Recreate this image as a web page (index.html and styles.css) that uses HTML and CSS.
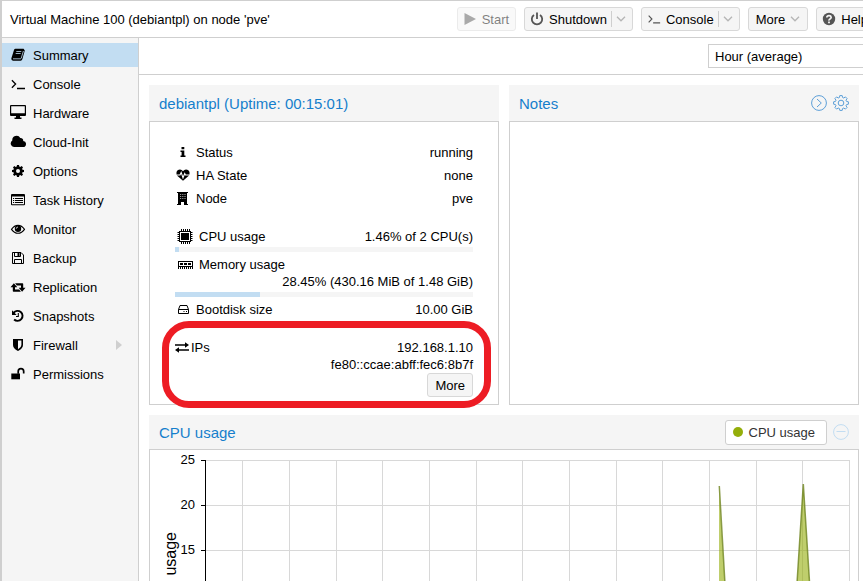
FILE: index.html
```html
<!DOCTYPE html>
<html lang="en">
<head>
<meta charset="utf-8">
<title>Virtual Machine 100</title>
<link rel="stylesheet" href="styles.css">
</head>
<body>
<svg class="sprite" aria-hidden="true">
  <symbol id="book" viewBox="0 0 16 16"><path d="M5.400 1.800H13.600L14.800 3.400 12.400 12Q12 13.800 10.600 13.800H3Q1.200 13.400 1.300 11.400L4 3Q4.400 1.800 5.400 1.800Z"/><path d="M6.300 4.500H11.300M5.700 6.500H10.700M3 11.800H10.400Q11 11.800 11.300 11L13.400 4" fill="none" stroke="#c2ddf2" stroke-width=".8"/></symbol>
  <symbol id="terminal" viewBox="0 0 16 16"><path d="M1.900 4.200 5.600 8 1.900 11.800M7 12.500H15" fill="none" stroke="currentColor" stroke-width="1.300"/></symbol>
  <symbol id="desktop" viewBox="0 0 16 16"><path fill-rule="evenodd" d="M1 0H15Q16 0 16 1V10Q16 11 15 11H10V12.500H11.500V14H4.500V12.500H6V11H1Q0 11 0 10V1Q0 0 1 0ZM1.200 1.200V8.200H14.800V1.200Z"/></symbol>
  <symbol id="cloud" viewBox="0 0 16 16"><path d="M4 13A3.500 3.500 0 0 1 2.300 6.600 4.300 4.300 0 0 1 10.300 4 2.600 2.600 0 0 1 13.200 7 3 3 0 0 1 12.800 13Z"/></symbol>
  <symbol id="gear" viewBox="0 0 16 16"><path fill-rule="evenodd" d="M7 2H9L9.300 3.600 10.300 4 11.700 3.100 13 4.400 12.100 5.800 12.500 6.800 14 7V9L12.500 9.300 12.100 10.200 13 11.600 11.700 13 10.300 12.100 9.300 12.500 9 14H7L6.700 12.500 5.700 12.100 4.300 13 3 11.600 3.900 10.200 3.500 9.300 2 9V7L3.500 6.800 3.900 5.800 3 4.400 4.300 3.100 5.700 4 6.700 3.600ZM8 6A2 2 0 1 0 8 10 2 2 0 1 0 8 6Z"/></symbol>
  <symbol id="list" viewBox="0 0 16 16"><path fill-rule="evenodd" d="M2 2H14Q15 2 15 3V12.300Q15 13.300 14 13.300H2Q1 13.300 1 12.300V3Q1 2 2 2ZM2 4.500V12.300H14V4.500Z"/><path d="M3 6.500H4.200M5 6.500H13M3 8.500H4.200M5 8.500H13M3 10.500H4.200M5 10.500H13" stroke="currentColor"/></symbol>
  <symbol id="eye" viewBox="0 0 16 16"><path fill="none" stroke="currentColor" stroke-width="1.100" d="M1.500 8.400Q4.200 4.400 8 4.400T14.500 8.400Q11.800 12.300 8 12.300T1.500 8.400Z"/><circle cx="8" cy="7.800" r="3.200"/><path d="M6.300 7.700Q6.300 6 8 6" fill="none" stroke="#f4f4f4" stroke-width=".8"/></symbol>
  <symbol id="floppy" viewBox="0 0 16 16"><path d="M2.500 2.500H11L13.500 5V13.500H2.500ZM4.500 13.500V9.500H11.500V13.500M4.500 2.500V6.500H10.500V2.500" fill="none" stroke="currentColor"/><path d="M7.500 3H9.500V6H7.500Z"/></symbol>
  <symbol id="retweet" viewBox="0 0 16 16"><path d="M3.900 4.300 7.300 8.200H5V10.600H9.200L10.900 12.700H3.500Q2.800 12.700 2.800 12V8.200H.500ZM12.100 12.700 8.700 8.800H11V6.400H6.800L5.100 4.300H12.500Q13.200 4.300 13.200 5V8.800H15.500Z"/></symbol>
  <symbol id="history" viewBox="0 0 16 16"><path d="M3.600 4.800A5 5 0 1 1 4.100 11.500" fill="none" stroke="currentColor" stroke-width="1.900"/><path d="M2 2.300V7H6.700Z"/><path d="M8.300 5V8.500H6" fill="none" stroke="currentColor" stroke-width="1.100"/></symbol>
  <symbol id="shield" viewBox="0 0 16 16"><path fill-rule="evenodd" d="M3 2H13V8Q13 11.500 8 14 3 11.500 3 8ZM8 3.600V12.200Q11.400 10.400 11.400 8V3.600Z"/></symbol>
  <symbol id="unlock" viewBox="0 0 16 16"><path d="M1.300 7.500H10V13.300H1.300Z"/><path d="M8.200 7.800V5.400A2.700 2.700 0 0 1 13.700 5.400V7.500" fill="none" stroke="currentColor" stroke-width="1.700"/></symbol>
  <symbol id="info" viewBox="0 0 16 16"><path d="M6.500 3H9.300V5.200H6.500ZM5.500 6.400H9.300V11.400H10.500V13H5.500V11.400H6.600V8H5.500Z"/></symbol>
  <symbol id="heart" viewBox="0 0 16 16"><path d="M8 13.800 2.500 9Q1 7.200 1.500 5.200 2.200 2.500 5 2.500 6.800 2.500 8 4.200 9.200 2.500 11 2.500 13.800 2.500 14.500 5.200 15 7.200 13.500 9Z"/><path d="M1.500 8H5L6.200 5.400 8 10.800 9.700 6.500 10.500 8H14.500" fill="none" stroke="#fff" stroke-width="1.100"/></symbol>
  <symbol id="building" viewBox="0 0 16 16"><path d="M3 2H12V14H9V12H6V14H3Z"/><path d="M5 4.500H11M5 6.500H11M5 8.500H11" stroke="#999" stroke-dasharray="1 .8"/><path d="M2 14.500H6M9 14.500H13M2 2.500H13" stroke="currentColor"/></symbol>
  <symbol id="chip" viewBox="0 0 16 16"><path fill-rule="evenodd" d="M2 3H14V14H2ZM3 4V13H13V4Z"/><path d="M4 5H12V12H4Z"/><path d="M4.500 1V3M6.500 1V3M8.500 1V3M10.500 1V3M12.500 1V3M4.500 14V16M6.500 14V16M8.500 14V16M10.500 14V16M12.500 14V16M.5 4.500H2M.5 6.500H2M.5 8.500H2M.5 10.500H2M.5 12.500H2M14 4.500H15.500M14 6.500H15.500M14 8.500H15.500M14 10.500H15.500M14 12.500H15.500" stroke="currentColor"/></symbol>
  <symbol id="memory" viewBox="0 0 16 16"><path fill-rule="evenodd" d="M1 5H16V11H1ZM2 6V10H15V6Z"/><path d="M3 7H6V9H3ZM7 7H10V9H7ZM11 7H14V9H11Z"/><path d="M1 12H16" stroke="currentColor" stroke-width="2" stroke-dasharray="1 1"/></symbol>
  <symbol id="disk" viewBox="0 0 16 16"><path d="M3.500 8.500 5 4.500H12L13.500 8.500V12.500H3.500ZM3.500 8.500H13.500" fill="none" stroke="currentColor"/><path d="M8.500 10.500H9.500M11 10.500H12" stroke="currentColor"/></symbol>
  <symbol id="exchange" viewBox="0 0 14 16"><path d="M0 5.200H10V3.200L14 6 10 8.800V6.800H0ZM14 10.200H4V8.200L0 11 4 13.800V11.800H14Z"/></symbol>
  <symbol id="play" viewBox="0 0 14 14"><path d="M1.500 1 13 7 1.500 13Z"/></symbol>
  <symbol id="power" viewBox="0 0 14 14"><path d="M4 3A5.200 5.200 0 1 0 10 3M7 .5V7" fill="none" stroke="currentColor" stroke-width="1.800"/></symbol>
  <symbol id="help" viewBox="0 0 14 14"><circle cx="7" cy="7" r="6.200"/><path d="M4.800 5.500Q5 3.600 7 3.600T9.200 5.300Q9.200 6.300 8 7T7 8.600" fill="none" stroke="#f5f5f5" stroke-width="1.700"/><path d="M6.100 9.400H7.900V11.200H6.100Z" fill="#f5f5f5"/></symbol>
  <symbol id="chevron" viewBox="0 0 10 6"><path d="M1 .8 5 4.800 9 .8" fill="none" stroke="#b5b5b5" stroke-width="1.300"/></symbol>
  <symbol id="next" viewBox="0 0 16 16"><circle cx="8" cy="8" r="7.400" fill="none" stroke="currentColor"/><path d="M6 4 10.300 8 6 12" fill="none" stroke="currentColor"/></symbol>
  <symbol id="settings" viewBox="0 0 16 16"><path d="M6.800.6H9.200L9.600 2.500 10.800 3 12.400 1.900 14.100 3.600 13 5.200 13.500 6.400 15.400 6.800V9.200L13.500 9.600 13 10.800 14.100 12.400 12.400 14.100 10.800 13 9.600 13.500 9.200 15.400H6.800L6.400 13.500 5.200 13 3.600 14.100 1.900 12.400 3 10.800 2.500 9.600.6 9.200V6.800L2.500 6.400 3 5.200 1.900 3.600 3.600 1.900 5.200 3 6.400 2.500Z" fill="none" stroke="currentColor"/><circle cx="8" cy="8" r="2.800" fill="none" stroke="currentColor"/></symbol>
  <symbol id="minus" viewBox="0 0 16 16"><circle cx="8" cy="8" r="7.400" fill="none" stroke="currentColor"/><path d="M3.500 7.500H12.500" stroke="currentColor"/></symbol>
</svg>

<div class="app">
  <header class="titlebar">
    <h1>Virtual Machine 100 (debiantpl) on node 'pve'</h1>
    <div class="actions">
      <button class="btn" disabled><svg class="glyph"><use href="#play"/></svg>Start</button>
      <button class="btn"><svg class="glyph"><use href="#power"/></svg>Shutdown<span class="drop"><svg class="chev"><use href="#chevron"/></svg></span></button>
      <button class="btn"><svg class="glyph"><use href="#terminal"/></svg>Console<span class="drop"><svg class="chev"><use href="#chevron"/></svg></span></button>
      <button class="btn menu">More<svg class="chev"><use href="#chevron"/></svg></button>
      <button class="btn"><svg class="glyph"><use href="#help"/></svg>Help</button>
    </div>
  </header>
  <div class="columns">
    <nav class="side">
      <a class="active" href="#"><svg class="icon"><use href="#book"/></svg>Summary</a>
      <a href="#"><svg class="icon"><use href="#terminal"/></svg>Console</a>
      <a href="#"><svg class="icon"><use href="#desktop"/></svg>Hardware</a>
      <a href="#"><svg class="icon"><use href="#cloud"/></svg>Cloud-Init</a>
      <a href="#"><svg class="icon"><use href="#gear"/></svg>Options</a>
      <a href="#"><svg class="icon"><use href="#list"/></svg>Task History</a>
      <a href="#"><svg class="icon"><use href="#eye"/></svg>Monitor</a>
      <a href="#"><svg class="icon"><use href="#floppy"/></svg>Backup</a>
      <a href="#"><svg class="icon"><use href="#retweet"/></svg>Replication</a>
      <a href="#"><svg class="icon"><use href="#history"/></svg>Snapshots</a>
      <a href="#"><svg class="icon"><use href="#shield"/></svg>Firewall<span class="caret"></span></a>
      <a href="#"><svg class="icon"><use href="#unlock"/></svg>Permissions</a>
    </nav>
    <main>
      <div class="rangebar">
        <select aria-label="Time range"><option>Hour (average)</option></select>
      </div>
      <div class="panels">
        <section class="panel">
          <header><h2>debiantpl (Uptime: 00:15:01)</h2></header>
          <div class="body status">
            <div class="row"><svg class="icon"><use href="#info"/></svg><span>Status</span><b>running</b></div>
            <div class="row"><svg class="icon"><use href="#heart"/></svg><span>HA State</span><b>none</b></div>
            <div class="row"><svg class="icon"><use href="#building"/></svg><span>Node</span><b>pve</b></div>
            <div class="meter">
              <div class="line"><svg class="icon"><use href="#chip"/></svg><span>CPU usage</span><b>1.46% of 2 CPU(s)</b></div>
              <div class="bar"><i style="width:1.46%"></i></div>
            </div>
            <div class="meter">
              <div class="line"><svg class="icon"><use href="#memory"/></svg><span>Memory usage</span><b>28.45% (430.16 MiB of 1.48 GiB)</b></div>
              <div class="bar"><i style="width:28.45%"></i></div>
            </div>
            <div class="line disk"><svg class="icon"><use href="#disk"/></svg><span>Bootdisk size</span><b>10.00 GiB</b></div>
            <div class="ips">
              <div class="line"><svg class="icon"><use href="#exchange"/></svg><span>IPs</span><b>192.168.1.10<br>fe80::ccae:abff:fec6:8b7f</b></div>
              <button class="btn">More</button>
            </div>
          </div>
        </section>
        <section class="panel">
          <header><h2>Notes</h2>
            <button class="tool" aria-label="Expand"><svg><use href="#next"/></svg></button>
            <button class="tool" aria-label="Edit"><svg><use href="#settings"/></svg></button>
          </header>
          <div class="body"></div>
        </section>
        <section class="panel wide">
          <header><h2>CPU usage</h2>
            <button class="legend"><i></i>CPU usage</button>
            <button class="tool faded" aria-label="Reset zoom"><svg><use href="#minus"/></svg></button>
          </header>
          <div class="body">
            <svg class="chart" viewBox="0 0 708 160">
              <path class="grid" d="M56 10.500H700M56 55.500H700M56 100.500H700M56 145.500H700M92.500 10V160M139.500 10V160M186.500 10V160M232.500 10V160M279.500 10V160M326.500 10V160M372.500 10V160M419.500 10V160M466.500 10V160M512.500 10V160M559.500 10V160M606.500 10V160M652.500 10V160M699.500 10V160"/>
              <path class="axis" d="M55.500 10V160M51 10.500H56M51 55.500H56M51 100.500H56M51 145.500H56"/>
              <path class="area" d="M569 36 576.500 160H569ZM653.300 34 661.300 160H645.300Z"/>
              <path class="series" d="M569.300 36 576.500 160M645.300 160 653.300 34 661.300 160"/>
              <g class="ticks"><text x="45" y="14">25</text><text x="45" y="59">20</text><text x="45" y="104">15</text></g>
              <text class="axis-title" transform="rotate(-90)" x="-82" y="26">usage</text>
            </svg>
          </div>
        </section>
      </div>
    </main>
  </div>
</div>
</body>
</html>
```
FILE: styles.css
```css
* { box-sizing: border-box; }

body {
  margin: 0;
  font: 13px/17px "Liberation Sans", Arial, sans-serif;
  color: #000;
  background: #fff;
}

h1, h2 { margin: 0; font-weight: normal; }
b { font-weight: normal; }
button, select { font: inherit; color: inherit; }
svg { display: block; fill: currentColor; flex: none; }
.sprite { position: absolute; width: 0; height: 0; }
.icon { width: 16px; height: 16px; }

.app {
  display: flex;
  flex-direction: column;
  height: 100vh;
  overflow: hidden;
  border-top: 1px solid #cfcfcf;
  border-left: 2px solid #cfcfcf;
}

.titlebar {
  display: flex;
  flex: none;
  align-items: center;
  justify-content: space-between;
  height: 37px;
  padding-left: 8px;
  border-bottom: 1px solid #cfcfcf;
}
.titlebar h1 { font-size: 13px; white-space: nowrap; }
.actions { display: flex; gap: 8px; margin-right: -12px; }

.btn {
  display: flex;
  align-items: center;
  height: 24px;
  padding: 0 7px;
  border: 1px solid #d8d8d8;
  border-radius: 3px;
  background: #f5f5f5;
  white-space: nowrap;
}
.btn:disabled { opacity: .5; }
.glyph { width: 14px; height: 14px; margin-right: 5px; color: #555; }
.actions .btn { padding: 0 6px 0 5px; }
.drop { display: flex; align-items: center; height: 16px; margin-left: 4px; padding-left: 4px; border-left: 1px solid #cfcfcf; }
.chev { width: 10px; height: 6px; }
.actions .menu { padding: 0 7px; }
.menu .chev { margin-left: 5px; }

.columns { display: flex; flex: 1; min-height: 0; }

.side {
  display: flex;
  flex: none;
  flex-direction: column;
  gap: 5px;
  width: 137px;
  padding-top: 5px;
  border-right: 1px solid #cfcfcf;
  background: #f5f5f5;
}
.side a {
  display: flex;
  align-items: center;
  gap: 7px;
  height: 24px;
  padding: 0 16px 0 8px;
  color: #000;
  text-decoration: none;
}
.side .active { background: #c2ddf2; }
.caret { margin-left: auto; border: 5px solid transparent; border-left: 6px solid #cfcfcf; border-right: 0; }

main { flex: 1; min-width: 0; }
.rangebar {
  display: flex;
  align-items: center;
  justify-content: flex-end;
  height: 37px;
  overflow: hidden;
  border-bottom: 1px solid #cfcfcf;
}
.rangebar select {
  appearance: none;
  flex: none;
  width: 175px;
  height: 24px;
  margin-right: -20px;
  padding: 0 6px;
  border: 1px solid #cfcfcf;
  border-radius: 0;
  background: #fff;
}

.panels {
  display: grid;
  grid-template-columns: 1fr 1fr;
  gap: 10px;
  padding: 10px 4px 10px 10px;
}
.panel { display: flex; flex-direction: column; min-width: 0; }
.panel header {
  display: flex;
  align-items: center;
  gap: 6px;
  height: 36px;
  padding: 0 10px;
  background: #f5f5f5;
}
.wide { grid-column: 1 / -1; }
.wide header { height: 34px; }
.panel h2 { flex: 1; font-size: 15px; color: #157fcc; }
.body { flex: 1; border: 1px solid #cfcfcf; }

.tool { width: 16px; height: 16px; padding: 0; border: 0; background: none; color: #5c9fd8; }
.tool svg { width: 16px; height: 16px; }
.faded { color: #c2ddf2; }
.legend {
  display: flex;
  align-items: center;
  gap: 6px;
  height: 25px;
  padding: 0 11px 0 7px;
  border: 1px solid #cfcfcf;
  border-radius: 3px;
  background: #fff;
  color: #333;
}
.legend i { width: 10px; height: 10px; border-radius: 50%; background: #94ae0a; }

.status { padding: 19px 25px 7px; }
.row { display: flex; align-items: flex-start; gap: 5px; height: 23px; padding-top: 3px; }
.row b { margin-left: auto; }
.line { display: flex; flex-wrap: wrap; align-items: flex-start; column-gap: 6px; }
.line b { margin-left: auto; text-align: right; }
.meter { margin-bottom: 4px; }
.row + .meter { margin-top: 18px; }
.meter .icon { margin-left: 2px; }
.bar { height: 5px; margin-top: 2px; background: #f5f5f5; }
.bar i { display: block; height: 100%; background: #c2ddf2; }
.disk { column-gap: 5px; }
.ips {
  position: relative;
  display: flex;
  flex-direction: column;
  align-items: flex-end;
  margin-top: 21px;
}
.ips .line { align-self: stretch; column-gap: 2px; }
.ips .icon { width: 14px; }
.ips::after {
  content: "";
  position: absolute;
  inset: -18px -18px -11px -13px;
  border: 7px solid #ed1c24;
  border-radius: 27px;
  pointer-events: none;
}

.chart { width: 100%; height: auto; }
.grid { fill: none; stroke: #d8d8d8; }
.axis { fill: none; stroke: #000; }
.area { fill: #94ae0a; fill-opacity: .6; }
.series { fill: none; stroke: #6f8420; stroke-opacity: .8; stroke-width: 1.5; }
.ticks { font-size: 13px; text-anchor: end; }
.axis-title { font-size: 16px; text-anchor: end; }
```
